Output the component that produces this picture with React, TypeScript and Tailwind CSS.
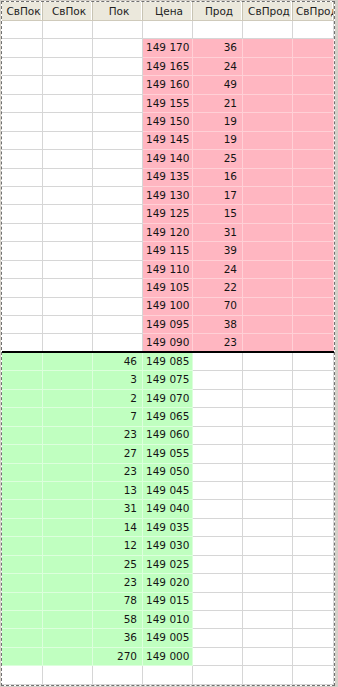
import React from "react";

const red: [string, string][] = [
  ["149 170", "36"], ["149 165", "24"], ["149 160", "49"], ["149 155", "21"],
  ["149 150", "19"], ["149 145", "19"], ["149 140", "25"], ["149 135", "16"],
  ["149 130", "17"], ["149 125", "15"], ["149 120", "31"], ["149 115", "39"],
  ["149 110", "24"], ["149 105", "22"], ["149 100", "70"], ["149 095", "38"],
  ["149 090", "23"],
];
const green: [string, string][] = [
  ["46", "149 085"], ["3", "149 075"], ["2", "149 070"], ["7", "149 065"],
  ["23", "149 060"], ["27", "149 055"], ["23", "149 050"], ["13", "149 045"],
  ["31", "149 040"], ["14", "149 035"], ["12", "149 030"], ["25", "149 025"],
  ["23", "149 020"], ["78", "149 015"], ["58", "149 010"], ["36", "149 005"],
  ["270", "149 000"],
];

const widths = ["w-[41px]", "w-[50px]", "w-[50px]", "w-[50px]", "w-[50px]", "w-[50px]", "w-[41px]"];
const headers = ["СвПок", "СвПок", "Пок", "Цена", "Прод", "СвПрод", "СвПрод"];

type Kind = "w" | "r" | "g";

function Cell({ i, kind, text, align, last }: { i: number; kind: Kind; text?: string; align?: "l" | "r"; last?: boolean }) {
  const bg = kind === "r" ? "bg-[#ffb6c1] border-[#ffd0d6]" : kind === "g" ? "bg-[#c0ffc0] border-[#dcffdc]" : "bg-white border-[#d6d6d6]";
  const bb = last ? "" : "border-b";
  const al = align === "l" ? "justify-start pl-[3px]" : "justify-end pr-[5px]";
  return (
    <div className={`${widths[i]} shrink-0 h-full border-r ${bb} ${bg} flex items-center ${al} overflow-hidden whitespace-nowrap`}>
      {text}
    </div>
  );
}

function Row({ kinds, texts, aligns, thick }: { kinds: Kind[]; texts: (string | undefined)[]; aligns: ("l" | "r")[]; thick?: boolean }) {
  return (
    <div className={`flex h-[18.45px] ${thick ? "border-b-2 border-black" : ""}`}>
      {kinds.map((k, i) => (
        <Cell key={i} i={i} kind={k} text={texts[i]} align={aligns[i]} last={thick} />
      ))}
    </div>
  );
}

export default function App() {
  const aligns: ("l" | "r")[] = ["r", "r", "r", "l", "r", "r", "r"];
  const W: Kind[] = ["w", "w", "w", "w", "w", "w", "w"];
  const R: Kind[] = ["w", "w", "w", "r", "r", "r", "r"];
  const G: Kind[] = ["g", "g", "g", "g", "w", "w", "w"];
  return (
    <div
      className="w-[338px] h-[687px] bg-[#d4d0c8] pt-px pl-px overflow-hidden text-[10.5px] text-[#141414]"
      style={{ fontFamily: '"DejaVu Sans", Verdana, sans-serif' }}
    >
      <div className="w-[334px] h-[685px] border border-dashed border-[#707070] bg-white overflow-hidden">
        <div className="flex h-[19px] bg-[#ebe8dc] border-b border-[#cfcabb]">
          {headers.map((h, i) => (
            <div
              key={i}
              className={`${widths[i]} shrink-0 h-full leading-[18px] text-center pl-[3px] border-r border-r-[#c8c4b4] shadow-[inset_-1px_0_0_#ffffff] overflow-hidden whitespace-nowrap text-[#222222]`}
            >
              {h}
            </div>
          ))}
        </div>
        <Row kinds={W} texts={[]} aligns={aligns} />
        {red.map(([p, s], idx) => (
          <Row key={"r" + idx} kinds={R} texts={[undefined, undefined, undefined, p, s]} aligns={aligns} thick={idx === red.length - 1} />
        ))}
        {green.map(([q, p], idx) => (
          <Row key={"g" + idx} kinds={G} texts={[undefined, undefined, q, p]} aligns={aligns} />
        ))}
        <Row kinds={W} texts={[]} aligns={aligns} />
      </div>
    </div>
  );
}
